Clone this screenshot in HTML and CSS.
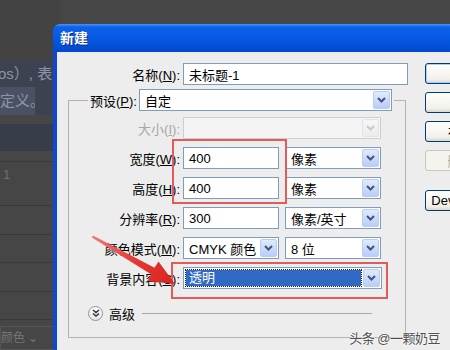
FILE: index.html
```html
<!DOCTYPE html>
<html>
<head>
    <title>新建</title>
    <link rel="stylesheet" href="styles.css">
</head>
<body>
    <div class="backdrop">
        <div class="bg-top"></div>
        <div class="bg-selection">
            <div class="bg-line">os）, 表</div>
            <div class="bg-chip">定义。</div>
        </div>
        <div class="bg-gap"></div>
        <div class="bg-band"></div>
        <div class="bg-row short"></div>
        <div class="bg-row tall">1</div>
        <div class="bg-row"></div>
        <div class="bg-row"></div>
        <div class="bg-row"></div>
        <div class="bg-row"></div>
        <div class="bg-bottom">颜色 ⌄</div>
    </div>

    <div class="dialog">
        <div class="title-bar">新建</div>
        <div class="dialog-body">
            <form class="form-main">
                <div class="name-row">
                    <label class="field-label">名称(<u>N</u>):</label>
                    <input class="text-input name-input" type="text" value="未标题-1">
                </div>

                <fieldset class="preset-box">
                    <legend>
                        <div class="legend-inner">
                            <label>预设(<u>P</u>):</label>
                            <div class="select preset-select">
                                <span class="value">自定</span>
                                <span class="arrow"><svg width="9" height="6" viewBox="0 0 9 6"><path d="M1 1 L4.5 4.5 L8 1" /></svg></span>
                            </div>
                        </div>
                    </legend>

                    <div class="field-row disabled">
                        <label class="field-label">大小(<u>I</u>):</label>
                        <div class="select size-select">
                            <span class="value"></span>
                            <span class="arrow"><svg width="9" height="6" viewBox="0 0 9 6"><path d="M1 1 L4.5 4.5 L8 1" /></svg></span>
                        </div>
                    </div>
                    <div class="field-row">
                        <label class="field-label">宽度(<u>W</u>):</label>
                        <input class="text-input" type="text" value="400">
                        <div class="select unit-select">
                            <span class="value">像素</span>
                            <span class="arrow"><svg width="9" height="6" viewBox="0 0 9 6"><path d="M1 1 L4.5 4.5 L8 1" /></svg></span>
                        </div>
                    </div>
                    <div class="field-row">
                        <label class="field-label">高度(<u>H</u>):</label>
                        <input class="text-input" type="text" value="400">
                        <div class="select unit-select">
                            <span class="value">像素</span>
                            <span class="arrow"><svg width="9" height="6" viewBox="0 0 9 6"><path d="M1 1 L4.5 4.5 L8 1" /></svg></span>
                        </div>
                    </div>
                    <div class="field-row">
                        <label class="field-label">分辨率(<u>R</u>):</label>
                        <input class="text-input" type="text" value="300">
                        <div class="select unit-select">
                            <span class="value">像素/英寸</span>
                            <span class="arrow"><svg width="9" height="6" viewBox="0 0 9 6"><path d="M1 1 L4.5 4.5 L8 1" /></svg></span>
                        </div>
                    </div>
                    <div class="field-row">
                        <label class="field-label">颜色模式(<u>M</u>):</label>
                        <div class="select mode-select">
                            <span class="value">CMYK 颜色</span>
                            <span class="arrow"><svg width="9" height="6" viewBox="0 0 9 6"><path d="M1 1 L4.5 4.5 L8 1" /></svg></span>
                        </div>
                        <div class="select unit-select">
                            <span class="value">8 位</span>
                            <span class="arrow"><svg width="9" height="6" viewBox="0 0 9 6"><path d="M1 1 L4.5 4.5 L8 1" /></svg></span>
                        </div>
                    </div>
                    <div class="field-row">
                        <label class="field-label">背景内容(<u>C</u>):</label>
                        <div class="select bg-select focused">
                            <span class="value">透明</span>
                            <span class="arrow"><svg width="9" height="6" viewBox="0 0 9 6"><path d="M1 1 L4.5 4.5 L8 1" /></svg></span>
                        </div>
                    </div>

                    <div class="advanced">
                        <span class="toggle"><svg width="8" height="8" viewBox="0 0 8 8"><path d="M1 1 L4 3.5 L7 1 M1 4.5 L4 7 L7 4.5" /></svg></span>
                        <span class="advanced-label">高级</span>
                        <span class="advanced-line"></span>
                    </div>
                </fieldset>
            </form>

            <div class="buttons">
                <button type="button" class="btn default">确定</button>
                <button type="button" class="btn">复位</button>
                <button type="button" class="btn">存储预设(S)...</button>
                <button type="button" class="btn" disabled>删除预设(D)...</button>
                <button type="button" class="btn device">Device Central(E)...</button>
            </div>
        </div>
    </div>

    <!-- annotations drawn over the screenshot -->
    <div class="mark-box size-mark"></div>
    <div class="mark-box bg-mark"></div>
    <svg class="red-arrow" width="450" height="350" viewBox="0 0 450 350">
        <defs>
            <linearGradient id="arrowFill" x1="92" y1="237" x2="175" y2="284" gradientUnits="userSpaceOnUse">
                <stop offset="0" stop-color="#f07a7a" />
                <stop offset="0.5" stop-color="#e53a35" />
                <stop offset="1" stop-color="#d9231f" />
            </linearGradient>
        </defs>
        <polygon points="93,235.5 154.5,267.8 158.5,261.5 175,284 147.5,281 151,274.2 91.8,237.6" fill="url(#arrowFill)" />
    </svg>

    <div class="watermark">头条 @一颗奶豆</div>
</body>
</html>
```

FILE: styles.css
```css
body {
    margin: 0;
    width: 450px;
    height: 350px;
    overflow: hidden;
    position: relative;
    background-color: #464646;
    font-family: "Liberation Sans", "Noto Sans CJK SC", sans-serif;
    font-size: 13px;
    color: #000;
}

/* blurred editor behind the dialog */
.backdrop {
    width: 60px;
    height: 350px;
    display: flex;
    flex-direction: column;
    color: #8c96a8;
    font-size: 15px;
}
.bg-top {
    height: 62px;
    background-color: #434343;
}
.bg-selection {
    height: 56px;
    background-color: #3c4250;
}
.bg-line {
    height: 26px;
    line-height: 26px;
    margin-left: -2px;
    white-space: nowrap;
}
.bg-chip {
    width: 35px;
    height: 28px;
    line-height: 28px;
    background-color: #4a5162;
    white-space: nowrap;
    overflow: hidden;
}
.bg-gap {
    height: 9px;
}
.bg-band {
    height: 27px;
    background-color: #373d49;
}
.bg-row {
    height: 28px;
    border-bottom: 1px solid #3b3b3b;
    color: #6f6f6f;
    font-size: 13px;
    padding-left: 3px;
    line-height: 26px;
}
.bg-row.short {
    height: 11px;
}
.bg-row.tall {
    height: 44px;
}
.bg-bottom {
    margin-top: 6px;
    border: 1px solid #555;
    color: #777;
    font-size: 12px;
    height: 22px;
    line-height: 22px;
    white-space: nowrap;
}

/* dialog window */
.dialog {
    position: absolute;
    left: 53px;
    top: 24px;
    width: 540px;
    height: 340px;
    background-color: #0c48d4;
    border-radius: 7px 7px 0 0;
    display: flex;
    flex-direction: column;
}
.title-bar {
    height: 28px;
    line-height: 29px;
    padding-left: 7px;
    color: #fff;
    font-weight: bold;
    font-size: 14px;
    text-shadow: 1px 1px 0 #0a2a8a;
    border-radius: 7px 7px 0 0;
    background: linear-gradient(#4a95f6 0, #0e62ea 3px, #0558e2 55%, #0347cc 100%);
}
.dialog-body {
    flex: 1;
    margin-left: 4px;
    background-color: #ededed;
    display: flex;
    padding: 11px 0 0 11px;
}
.form-main {
    width: 340px;
    flex-shrink: 0;
    margin: 0;
}
.name-row {
    display: flex;
    align-items: center;
    height: 22px;
    padding-left: 20px;
}
.field-label {
    width: 92px;
    flex-shrink: 0;
    margin-right: 3px;
    text-align: right;
    white-space: nowrap;
}

.preset-box {
    width: 338px;
    min-width: 0;
    box-sizing: border-box;
    margin: 4px 0 0 0;
    padding: 6px 10px 17px 19px;
    border: 1px solid #b3b3b3;
}
.preset-box legend {
    padding: 0 2px;
}
.legend-inner {
    display: flex;
    align-items: center;
}
.legend-inner label {
    margin-right: 2px;
}

.field-row {
    display: flex;
    align-items: center;
    height: 22px;
    margin-bottom: 8px;
}
.field-row.disabled .field-label {
    color: #a7a7a7;
}

.text-input {
    width: 96px;
    height: 22px;
    box-sizing: border-box;
    border: 1px solid #7f9db9;
    padding: 0 5px;
    font: inherit;
    background-color: #fff;
    margin: 0 6px 0 0;
}
.text-input.name-input {
    width: 225px;
    flex-shrink: 0;
    margin: 0;
}

.select {
    display: flex;
    align-items: center;
    height: 22px;
    box-sizing: border-box;
    border: 1px solid #7f9db9;
    background-color: #fff;
    padding-left: 5px;
}
.select .value {
    flex: 1;
    white-space: nowrap;
}
.select .arrow {
    width: 15px;
    height: 16px;
    margin-right: 1px;
    border: 1px solid #b9cdf2;
    border-radius: 2px;
    background: linear-gradient(#e1eafd, #b9cdf6);
    display: flex;
    align-items: center;
    justify-content: center;
}
.select .arrow path {
    fill: none;
    stroke: #40557e;
    stroke-width: 2;
}
.preset-select {
    width: 253px;
}
.size-select {
    width: 198px;
    border-color: #c9d0d8;
    background-color: #f4f4f4;
}
.size-select .arrow {
    border-color: #e4e4e4;
    background: linear-gradient(#f6f6f6, #ececec);
}
.size-select .arrow path {
    stroke: #c4c8d0;
}
.unit-select {
    width: 96px;
}
.mode-select {
    width: 96px;
    margin-right: 6px;
}
.bg-select {
    width: 199px;
    padding-left: 2px;
}
.bg-select.focused .value {
    height: 16px;
    line-height: 16px;
    margin-right: 2px;
    padding-left: 3px;
    background-color: #316ac5;
    color: #fff;
    outline: 1px dotted #0c1f44;
}

.advanced {
    display: flex;
    align-items: center;
    height: 14px;
    margin-top: 17px;
}
.toggle {
    width: 13px;
    height: 13px;
    border: 1px solid #949494;
    border-radius: 50%;
    background: linear-gradient(#fff, #e4e4e4);
    display: flex;
    align-items: center;
    justify-content: center;
}
.toggle path {
    fill: none;
    stroke: #333;
    stroke-width: 1.5;
}
.advanced-label {
    margin-left: 6px;
}
.advanced-line {
    flex: 1;
    margin: 0 23px 0 7px;
    border-top: 1px solid #a8a8a8;
}

.buttons {
    margin-left: 17px;
    display: flex;
    flex-direction: column;
}
.btn {
    width: 126px;
    height: 21px;
    margin-bottom: 8px;
    padding: 0;
    border: 1px solid #003c74;
    border-radius: 3px;
    background: linear-gradient(#ffffff, #f1f0ea 80%, #dcd7cc);
    font: inherit;
    color: #000;
    white-space: nowrap;
    overflow: hidden;
}
.btn.default {
    box-shadow: inset 0 0 0 1px #b2cdf4;
}
.btn:disabled {
    border-color: #cbc8bb;
    background: #f4f3ee;
    color: #aca899;
}
.btn.device {
    margin-top: 11px;
}

/* red annotation marks */
.mark-box {
    position: absolute;
    border: 2px solid #e25b5b;
    box-sizing: border-box;
}
.size-mark {
    left: 172px;
    top: 139px;
    width: 115px;
    height: 65px;
}
.bg-mark {
    left: 171px;
    top: 262px;
    width: 217px;
    height: 37px;
}
.red-arrow {
    position: absolute;
    left: 0;
    top: 0;
}

.watermark {
    position: absolute;
    right: 10px;
    bottom: 3px;
    font-size: 13px;
    letter-spacing: -0.5px;
    color: #505050;
    text-shadow: 0 0 2px #fff, 0 0 2px #fff;
    white-space: nowrap;
}
```
